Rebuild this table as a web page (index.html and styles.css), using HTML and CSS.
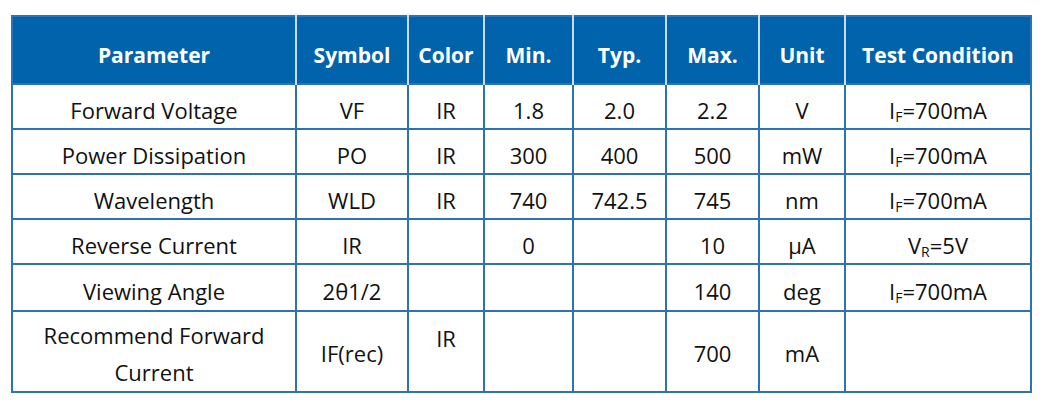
FILE: index.html
```
<!DOCTYPE html>
<html>
<head>
<meta charset="utf-8">
<link rel="stylesheet" href="styles.css">
</head>
<body>
<div class="wrap">
<table class="spec">
<colgroup>
<col class="c1"><col class="c2"><col class="c3"><col class="c4"><col class="c5"><col class="c6"><col class="c7"><col class="c8">
</colgroup>
<thead>
<tr><th>Parameter</th><th>Symbol</th><th>Color</th><th>Min.</th><th>Typ.</th><th>Max.</th><th>Unit</th><th>Test Condition</th></tr>
</thead>
<tbody>
<tr><td>Forward Voltage</td><td>VF</td><td>IR</td><td>1.8</td><td>2.0</td><td>2.2</td><td>V</td><td>I<sub>F</sub>=700mA</td></tr>
<tr><td>Power Dissipation</td><td>PO</td><td>IR</td><td>300</td><td>400</td><td>500</td><td>mW</td><td>I<sub>F</sub>=700mA</td></tr>
<tr><td>Wavelength</td><td>WLD</td><td>IR</td><td>740</td><td>742.5</td><td>745</td><td>nm</td><td>I<sub>F</sub>=700mA</td></tr>
<tr><td>Reverse Current</td><td>IR</td><td></td><td>0</td><td></td><td>10</td><td>μA</td><td>V<sub>R</sub>=5V</td></tr>
<tr class="r5"><td>Viewing Angle</td><td>2θ1/2</td><td></td><td></td><td></td><td>140</td><td>deg</td><td>I<sub>F</sub>=700mA</td></tr>
<tr class="last"><td>Recommend Forward<br>Current</td><td>IF(rec)</td><td class="top">IR</td><td></td><td></td><td>700</td><td>mA</td><td></td></tr>
</tbody>
</table>
</div>
</body>
</html>
```
FILE: styles.css
```
html, body {
  margin: 0;
  padding: 0;
  background: #ffffff;
}
.wrap {
  padding: 15px 0 0 11px;
}
.spec {
  border-collapse: collapse;
  table-layout: fixed;
  width: 1019px;
  font-family: "Open Sans", "Noto Sans", sans-serif;
  color: #111111;
  border: 2px solid #2b72b6;
}
.c1 { width: 284px; }
.c2 { width: 112px; }
.c3 { width: 76px; }
.c4 { width: 89px; }
.c5 { width: 93px; }
.c6 { width: 93px; }
.c7 { width: 86px; }
.c8 { width: 186px; }
.spec th {
  background: #0063ab;
  color: #ffffff;
  font-weight: 700;
  font-size: 21px;
  height: 68px;
  padding: 10px 0 0 0;
  box-sizing: border-box;
  text-align: center;
  vertical-align: middle;
  border-left: 2px solid #c9dcee;
  white-space: nowrap;
}
.spec th:first-child {
  border-left: none;
}
.spec td {
  font-size: 22px;
  height: 45px;
  padding: 6px 0 0 0;
  box-sizing: border-box;
  text-align: center;
  vertical-align: middle;
  border: 2px solid #2b72b6;
  white-space: nowrap;
  line-height: 30px;
}
.spec tr.r5 td {
  height: 47px;
}
.spec tr.last td {
  height: 81px;
  line-height: 37px;
  padding: 4px 0 0 0;
}
.spec tr.last td.top {
  vertical-align: top;
  padding-top: 8px;
}
.spec sub {
  font-size: 14px;
  vertical-align: -3px;
  line-height: 0;
}
```
